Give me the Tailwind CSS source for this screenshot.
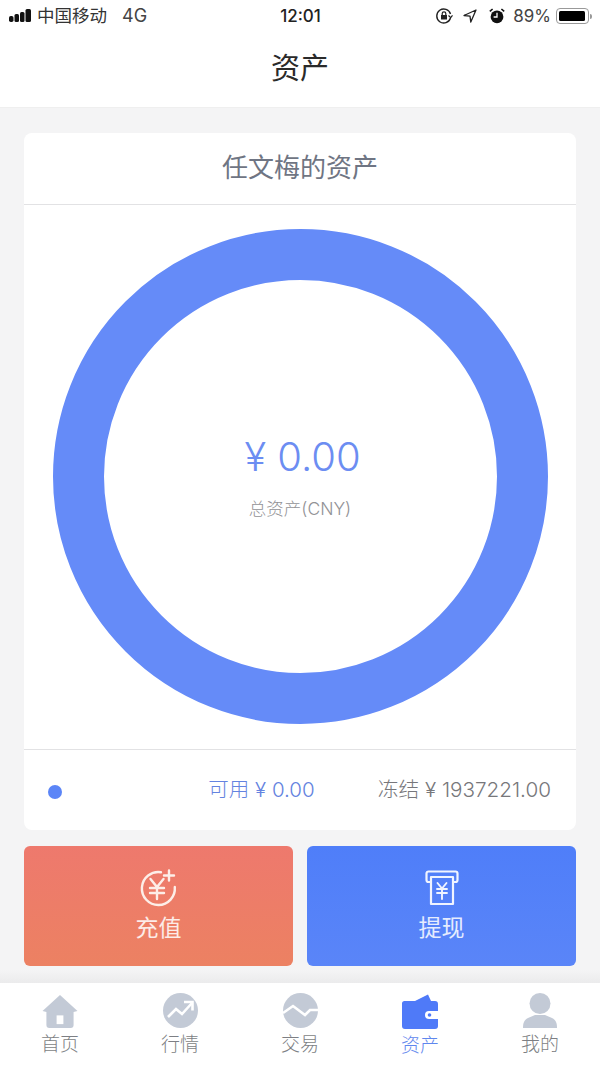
<!DOCTYPE html>
<html lang="zh-CN">
<head>
  <meta charset="UTF-8">
  <meta name="viewport" content="width=device-width, initial-scale=1.0">
  <title>资产</title>
  <script src="https://cdn.jsdelivr.net/npm/@tailwindcss/browser@4"></script>
</head>
<body class="w-[600px] h-[1067px] overflow-hidden bg-[#f4f4f5] font-['Inter','Noto_Sans_CJK_SC',sans-serif]">
  <div class="flex flex-col h-[1067px]">

    <!-- Status bar + title -->
    <header class="bg-white h-[108px] shrink-0 border-b border-[#efefef]">
      <div class="h-[32px] flex items-center justify-between pl-[9px] pr-[8px] text-[#222]">
        <div class="flex items-center w-[200px]">
          <svg class="w-[24px] h-[14px]" viewBox="0 0 24 14" fill="#111">
            <rect x="0" y="7" width="4.500" height="6" rx="1.800"/>
            <rect x="5.500" y="5" width="4.500" height="8" rx="1.500"/>
            <rect x="11" y="3" width="4.500" height="10" rx="1.500"/>
            <rect x="16.500" y="0" width="5.500" height="13" rx="1.500"/>
          </svg>
          <span class="text-[17.500px] leading-none ml-[4px] text-[#333]">中国移动</span>
          <span class="text-[18px] leading-none ml-[15px] text-[#444]">4G</span>
        </div>
        <span class="text-[17px] font-medium leading-none">12:01</span>
        <div class="flex items-center justify-end w-[200px]">
          <svg class="w-[18px] h-[18px]" viewBox="0 0 18 18" fill="none" stroke="#222">
            <path d="M15.500 11a7 7 0 1 1 0-4" stroke-width="1.400"/>
            <path d="M13.500 8.500l2.200 2.200 1.800-2.400" stroke-width="1.200"/>
            <rect x="6" y="8" width="6" height="4.500" fill="#222" stroke="none"/>
            <path d="M7.200 8V6.600a1.800 1.800 0 0 1 3.600 0V8" stroke-width="1.200"/>
          </svg>
          <svg class="w-[14px] h-[14px] ml-[10px]" viewBox="0 0 14 14" fill="none" stroke="#222" stroke-width="1.300">
            <path d="M13 1L1 6.500l6 .6.800 6z" stroke-linejoin="round"/>
          </svg>
          <svg class="w-[16px] h-[16px] ml-[12px]" viewBox="0 0 16 16" fill="#111">
            <circle cx="8" cy="8.800" r="6.400"/>
            <path d="M0.800 3.400L3.600 1M15.200 3.400L12.400 1" stroke="#111" stroke-width="1.600"/>
            <path d="M8 4.800v4.200H4.600" stroke="#fff" stroke-width="1.300" fill="none"/>
          </svg>
          <span class="text-[17px] leading-none ml-[8px] text-[#444]">89%</span>
          <div class="ml-[5px] w-[33px] h-[16px] rounded-[4px] border border-[#999] p-[2px]">
            <div class="w-[26px] h-full bg-black rounded-[1.500px]"></div>
          </div>
          <div class="w-[2px] h-[5px] bg-[#999] rounded-r-sm ml-[1px]"></div>
        </div>
      </div>
      <div class="h-[75px] flex items-center justify-center pb-[3px] text-[29px] leading-none text-[#2a2a2a]">资产</div>
    </header>

    <!-- Main -->
    <main class="flex-1 px-[24px] pt-[25px]">
      <section class="bg-white rounded-[8px] h-[697px] flex flex-col">
        <h2 class="h-[72px] shrink-0 flex items-center justify-center pb-[2px] border-b border-[#e2e2e4] text-[26px] leading-none text-[#6f7583] font-normal">任文梅的资产</h2>
        <div class="h-[545px] shrink-0 flex items-center justify-center pb-[2px] border-b border-[#e2e2e4]">
          <div class="w-[495px] h-[495px] rounded-full border-[51px] border-[#658bf8] flex flex-col items-center justify-center">
            <p class="text-[40px] font-light leading-none text-[#6c8df2] ml-[5px] mt-[2px]">¥ 0.00</p>
            <p class="text-[17.500px] font-light leading-none text-[#929296] mt-[23px]">总资产(CNY)</p>
          </div>
        </div>
        <div class="flex-1 flex items-center pl-[24px] pr-[25px]">
          <span class="w-[14px] h-[14px] rounded-full bg-[#5b85f7] mt-[3px]"></span>
          <span class="ml-auto text-[20.500px] font-light leading-none text-[#6483e0]">可用 ¥ 0.00</span>
          <span class="ml-[63px] text-[20.700px] font-light leading-none text-[#77777b]">冻结 ¥ 1937221.00</span>
        </div>
      </section>

      <!-- Actions -->
      <div class="grid grid-cols-2 gap-[14px] mt-[16px]">
        <button class="h-[120px] rounded-[6px] bg-gradient-to-b from-[#ee796d] to-[#ec8162] flex flex-col items-center text-white/85">
          <svg class="w-[40px] h-[40px] mt-[22px] -ml-[2px]" viewBox="0 0 40 40" fill="none" stroke="#fdeee8" stroke-width="2.400" stroke-linecap="round">
            <path d="M23 4.200A16.500 16.500 0 1 0 36.800 19"/>
            <path d="M12.500 11l6.500 8 6.500-8M12 20h14M12 25h14M19 19v12"/>
            <path d="M31 2.500v10M26 7.500h10"/>
          </svg>
          <span class="text-[23px] leading-none mt-[9px]">充值</span>
        </button>
        <button class="h-[120px] rounded-[6px] bg-gradient-to-b from-[#4f7ef9] to-[#5a85f8] flex flex-col items-center text-white/85">
          <svg class="w-[34px] h-[36px] mt-[24px]" viewBox="0 0 34 36" fill="none" stroke="#f0f4ff" stroke-width="2.200" stroke-linecap="round" stroke-linejoin="round">
            <path d="M6 12H3.500A2 2 0 0 1 1.500 10V3.500A2 2 0 0 1 3.500 1.500h27a2 2 0 0 1 2 2V10a2 2 0 0 1-2 2H28"/>
            <path d="M6 7h22v27H6z"/>
            <path d="M12.500 13l4.500 5.500 4.500-5.500M12 19h10M12 23h10M17 18.500V29" stroke-width="1.900"/>
          </svg>
          <span class="text-[23px] leading-none mt-[11px]">提现</span>
        </button>
      </div>
    </main>

    <!-- Tab bar -->
    <nav class="relative h-[84px] shrink-0 bg-white grid grid-cols-5">
      <div class="absolute left-0 right-0 top-[-13px] h-[13px] bg-gradient-to-b from-[#f4f4f5] to-[#ebebec]"></div>
      <a class="flex flex-col items-center pt-[12px]">
        <svg class="w-[36px] h-[33px]" viewBox="0 0 36 34" fill="#c3cad6">
          <path d="M18 0L36 16.500 32 17.500V31a3 3 0 0 1-3 3H7a3 3 0 0 1-3-3V17.500L0 16.500z"/>
          <rect x="14.500" y="21" width="7" height="9" fill="#fff"/>
        </svg>
        <span class="text-[19px] font-light leading-none text-[#7d7f84] mt-[7px]">首页</span>
      </a>
      <a class="flex flex-col items-center pt-[10px]">
        <svg class="w-[35px] h-[35px]" viewBox="0 0 35 35">
          <circle cx="17.500" cy="17.500" r="17.500" fill="#c3cad6"/>
          <path d="M5 24l8-8 6 5 10-11" fill="none" stroke="#fff" stroke-width="2.600"/>
          <path d="M21 9h8.500v8.500" fill="none" stroke="#fff" stroke-width="2.600"/>
        </svg>
        <span class="text-[19px] font-light leading-none text-[#7d7f84] mt-[7px]">行情</span>
      </a>
      <a class="flex flex-col items-center pt-[10px]">
        <svg class="w-[35px] h-[35px]" viewBox="0 0 35 35">
          <circle cx="17.500" cy="17.500" r="17.500" fill="#c3cad6"/>
          <path d="M0 20l10-7 12 9 5-5h8" fill="none" stroke="#fff" stroke-width="2.600"/>
        </svg>
        <span class="text-[19px] font-light leading-none text-[#7d7f84] mt-[7px]">交易</span>
      </a>
      <a class="flex flex-col items-center pt-[11px]">
        <svg class="w-[36px] h-[35px]" viewBox="0 0 36 35" fill="#4f7af8">
          <path d="M13 7L26 0.500 29 7z"/>
          <path d="M2.500 7H33a3 3 0 0 1 3 3v22a3 3 0 0 1-3 3H3a3 3 0 0 1-3-3V9.500A2.500 2.500 0 0 1 2.500 7z"/>
          <path d="M36 17H27a4 4 0 0 0 0 8h9z" fill="#fff"/>
          <circle cx="27.500" cy="21" r="1.800" fill="#4f7af8"/>
        </svg>
        <span class="text-[19px] font-light leading-none text-[#5f87ee] mt-[7px]">资产</span>
      </a>
      <a class="flex flex-col items-center pt-[10px]">
        <svg class="w-[34px] h-[35px]" viewBox="0 0 34 35" fill="#c3cad6">
          <circle cx="17" cy="10.500" r="10.500"/>
          <path d="M0 35c0-5 1-8 5-10l7-3h10l7 3c4 2 5 5 5 10z"/>
        </svg>
        <span class="text-[19px] font-light leading-none text-[#7d7f84] mt-[7px]">我的</span>
      </a>
    </nav>
  </div>
</body>
</html>
